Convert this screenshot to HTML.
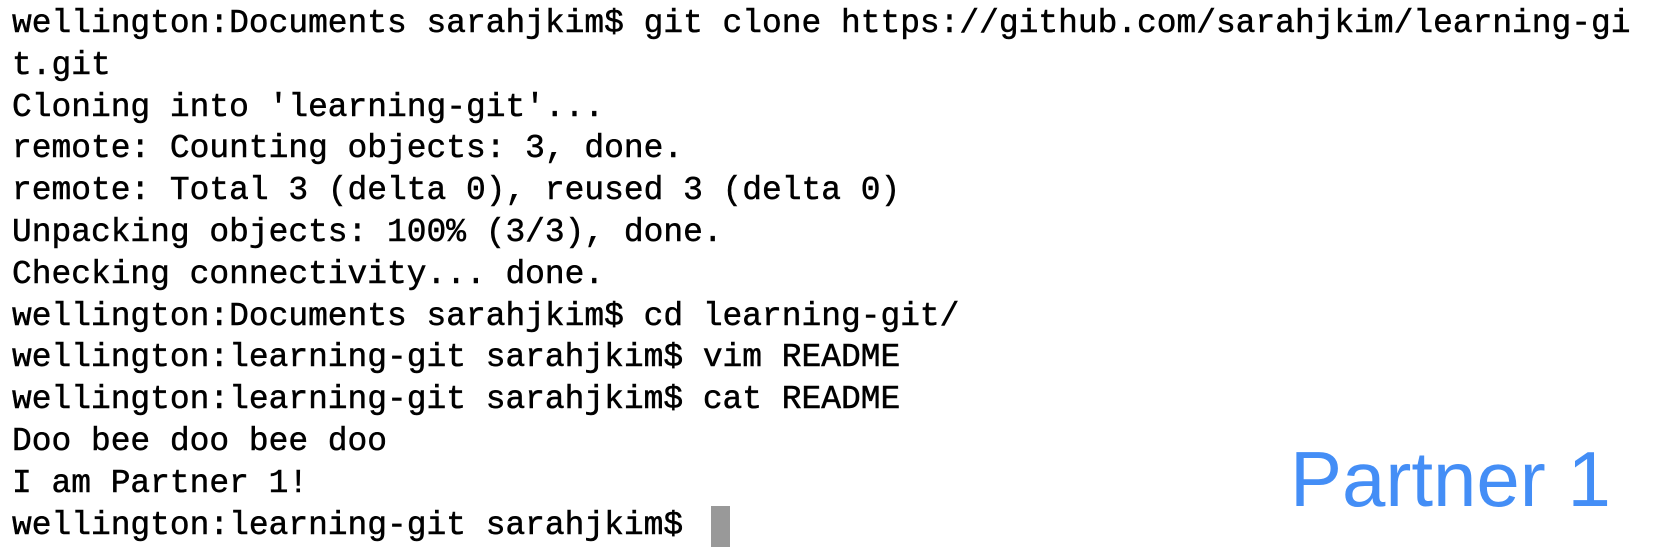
<!DOCTYPE html>
<html><head><style>
html,body{margin:0;padding:0;background:#fff;width:1656px;height:554px;overflow:hidden}
pre{position:absolute;left:12px;top:3px;margin:0;font-family:"Liberation Mono",monospace;font-size:32.9px;line-height:41.8px;color:#000;-webkit-text-stroke:0.5px #000}
.cur{display:inline-block;width:19px;height:41px;background:#999;vertical-align:top;margin-top:1px;margin-left:8px}
.p{position:absolute;left:1290px;top:440px;font-family:"Liberation Sans",sans-serif;font-size:78px;color:#448ef6;line-height:1}
</style></head><body>
<pre>wellington:Documents sarahjkim$ git clone https://github.com/sarahjkim/learning-gi
t.git
Cloning into 'learning-git'...
remote: Counting objects: 3, done.
remote: Total 3 (delta 0), reused 3 (delta 0)
Unpacking objects: 100% (3/3), done.
Checking connectivity... done.
wellington:Documents sarahjkim$ cd learning-git/
wellington:learning-git sarahjkim$ vim README
wellington:learning-git sarahjkim$ cat README
Doo bee doo bee doo
I am Partner 1!
wellington:learning-git sarahjkim$ <span class="cur"></span></pre>
<div class="p">Partner 1</div>
</body></html>
